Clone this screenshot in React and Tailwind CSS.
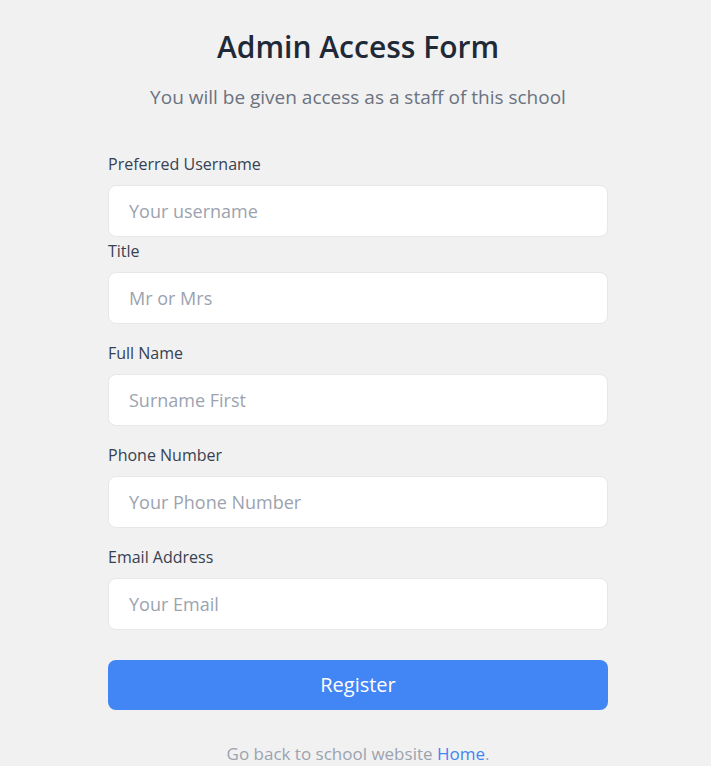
export default function App() {
  const fields = [
    { label: 'Preferred Username', placeholder: 'Your username', gap: 'mb-0.5' },
    { label: 'Title', placeholder: 'Mr or Mrs', gap: 'mb-[17px]' },
    { label: 'Full Name', placeholder: 'Surname First', gap: 'mb-[17px]' },
    { label: 'Phone Number', placeholder: 'Your Phone Number', gap: 'mb-[17px]' },
    { label: 'Email Address', placeholder: 'Your Email', gap: 'mb-[30px]' },
  ]

  return (
    <div className="min-h-screen bg-[#f1f1f1] pl-[5px] pt-[29px] font-['Open_Sans','Segoe_UI',sans-serif]">
      <div className="w-[500px] mx-auto">
        <h1 className="text-center text-[30px] leading-9 font-semibold text-[#1f2937] mb-[18px]">
          Admin Access Form
        </h1>
        <p className="text-center text-[19px] leading-7 text-[#6b7280] mb-[41px]">
          You will be given access as a staff of this school
        </p>

        <form onSubmit={e => e.preventDefault()}>
          {fields.map(f => (
            <div key={f.label} className={f.gap}>
              <label className="block text-base leading-6 text-[#374151] mb-[9px]">{f.label}</label>
              <input
                type="text"
                placeholder={f.placeholder}
                className="w-full h-[52px] px-5 bg-white border border-[#e5e7eb] rounded-lg text-lg text-[#374151] placeholder-[#9ca3af] outline-none"
              />
            </div>
          ))}

          <button
            type="submit"
            className="w-full h-[50px] rounded-lg bg-[#4285f4] text-white text-[20px]"
          >
            Register
          </button>
        </form>

        <p className="mt-8 text-center text-[17px] leading-6 text-[#9ca3af]">
          Go back to school website <a href="#" className="text-[#4285f4]">Home</a>.
        </p>
      </div>
    </div>
  )
}
